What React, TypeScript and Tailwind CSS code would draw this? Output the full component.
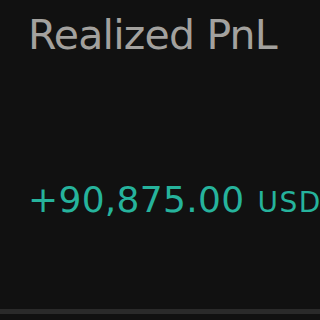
import React from 'react';

const App: React.FC = () => {
  return (
    <div
      className="w-[320px] h-[320px] bg-[#111111] flex flex-col overflow-hidden"
      style={{ fontFamily: '"DejaVu Sans", sans-serif' }}
    >
      <div className="pl-[28px] pt-[15px] text-[41px] leading-none tracking-[-0.8px] text-[#a3a19e] whitespace-nowrap">
        Realized PnL
      </div>
      <div className="mt-[126px] pl-[28px] flex items-baseline whitespace-nowrap text-[#26b39c]">
        <span className="text-[36px] leading-none tracking-[0.3px]">+90,875.00</span>
        <span className="ml-[13px] text-[28px] leading-none tracking-[1.5px]">USD</span>
      </div>
      <div className="mt-auto mb-[6px] h-[5px] bg-[#2a2a2a]" />
    </div>
  );
};

export default App;
